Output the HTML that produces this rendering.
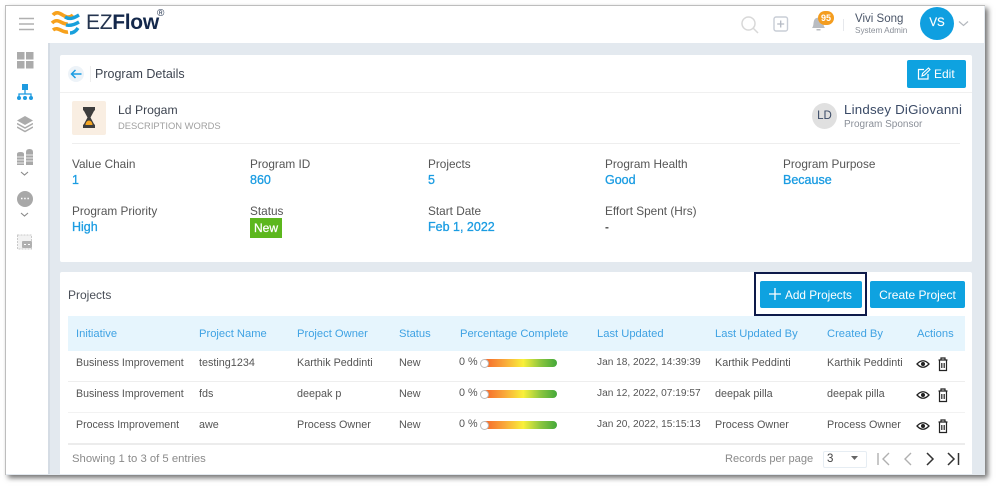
<!DOCTYPE html>
<html><head><meta charset="utf-8"><style>
html,body{margin:0;padding:0;width:1000px;height:491px;overflow:hidden;background:#fff;font-family:"Liberation Sans",sans-serif}
.w{position:absolute;left:0;top:0;width:1000px;height:491px;overflow:hidden;filter:blur(.35px)}
.a{position:absolute}
.t{position:absolute;white-space:nowrap;line-height:16px;font-size:11.8px;color:#555}
.b{color:#1b9ce2;font-size:12.5px;-webkit-text-stroke:.3px #1b9ce2}
.h{color:#3fa2e3;font-size:11.2px}
.c{font-size:10.8px;color:#555}
.bn{font-size:10.6px}
.d{font-size:10.15px}
</style></head><body><div class="w">
<!-- window -->
<div class="a" style="left:5px;top:5px;width:979px;height:469px;background:#e3e9ef;border:1px solid #bdbdbd;border-bottom:0;border-right:0;box-shadow:3px 3px 5px rgba(0,0,0,.55)"></div>
<!-- top bar -->
<div class="a" style="left:6px;top:6px;width:978px;height:37px;background:#fff"></div>
<!-- sidebar -->
<div class="a" style="left:6px;top:43px;width:42px;height:431px;background:#fff;border-right:2px solid #d5dce4"></div>
<!-- hamburger -->
<svg class="a" style="left:19px;top:17px" width="16" height="14"><path d="M0 1.500h15M0 7h15M0 12.500h15" stroke="#b0b0b0" stroke-width="1.600"/></svg>
<!-- logo -->
<svg class="a" style="left:50px;top:9px" width="32" height="28" viewBox="0 0 32 28"><path d="M3 6C8 0 13 8 18 8c3 0 4-1 5-2" fill="none" stroke="#f7a11c" stroke-width="3.600"/><path d="M2 14C8 8 12 16 18 15M3 21c5-4 9 3 15 2" fill="none" stroke="#f7a11c" stroke-width="3.600"/><path d="M15 8c5 3 9 1 14-2M16 16c4 1 8 0 13-3M20 24c3 0 6-2 8-5" fill="none" stroke="#19a0dc" stroke-width="3.400"/></svg>
<div class="t" style="left:86px;top:10px;font-size:21px;line-height:26px;color:#24344f;letter-spacing:-.3px">EZ<b style="color:#14284b">Flow</b></div>
<div class="t" style="left:157px;top:8px;font-size:10px;line-height:12px;color:#24344f">®</div>
<!-- top right icons -->
<svg class="a" style="left:741px;top:16px" width="18" height="18"><circle cx="7.500" cy="7.500" r="6.500" fill="none" stroke="#d8d8d8" stroke-width="1.500"/><path d="M12 12l5 5" stroke="#d8d8d8" stroke-width="1.500"/></svg>
<svg class="a" style="left:773px;top:16px" width="16" height="17"><rect x="1" y="1" width="13.500" height="14" rx="2" fill="none" stroke="#c8cdd6" stroke-width="1.400"/><path d="M7.700 4.500v7M4.200 8h7" stroke="#b5bac4" stroke-width="1.300"/></svg>
<svg class="a" style="left:811px;top:15px" width="16" height="17"><path d="M1 13c2-2 1-6 2.500-8.500C5 2 10 2 11.500 4.500 13 7 12 11 14 13z" fill="#b9bcc1"/><path d="M5.500 14h4v1.500h-4z" fill="#b9bcc1"/></svg>
<div class="a" style="left:818px;top:11px;width:16px;height:14px;border-radius:8px;background:#f49d1f;color:#fff;font-size:9px;font-weight:bold;line-height:14px;text-align:center">95</div>
<div class="a" style="left:843px;top:19px;width:1px;height:12px;background:#e6e8ec"></div>
<div class="t" style="left:855px;top:11px;font-size:11.500px;color:#4a5568">Vivi Song</div>
<div class="t" style="left:855px;top:23px;font-size:8.200px;color:#8a8f98">System Admin</div>
<div class="a" style="left:920px;top:7px;width:34px;height:33px;border-radius:50%;background:#0f9fe0;color:#fff;font-size:11.500px;line-height:33px;text-align:center;-webkit-text-stroke:.2px #fff">VS</div>
<svg class="a" style="left:958px;top:20px" width="11" height="8"><path d="M1 1.500l4.500 4 4.500-4" fill="none" stroke="#b4b8be" stroke-width="1.200"/></svg>
<!-- sidebar icons -->
<svg class="a" style="left:17px;top:52px" width="17" height="17"><path d="M0 0h7.500v7.500H0zM9 0h7.500v7.500H9zM0 9h7.500v7.500H0zM9 9h7.500v7.500H9z" fill="#ababab"/></svg>
<svg class="a" style="left:17px;top:84px" width="16" height="17"><path d="M5 0h6v6H5z" fill="#1e9be0"/><path d="M8 6v4M2 13v-3h12v3" fill="none" stroke="#1e9be0" stroke-width="1.300"/><circle cx="2" cy="14" r="2" fill="#1e9be0"/><circle cx="8" cy="14" r="2" fill="#1e9be0"/><circle cx="14" cy="14" r="2" fill="#1e9be0"/></svg>
<svg class="a" style="left:17px;top:116px" width="16" height="17"><path d="M8 0l8 4.500-8 4.500-8-4.500z" fill="#ababab"/><path d="M0 7.500l8 4.500 8-4.500M0 11l8 4.500 8-4.500" fill="none" stroke="#ababab" stroke-width="1.500"/></svg>
<svg class="a" style="left:17px;top:149px" width="16" height="16"><path d="M0 5q0-2 3.500-2T7 5v11H0zM9 3q0-3 3.500-3T16 3v13H9z" fill="#a8a8a8"/><path d="M0 8h7M0 11h7M0 14h7M9 6h7M9 9h7M9 12h7" stroke="#fff" stroke-width=".8"/></svg>
<svg class="a" style="left:20px;top:171px" width="9" height="6"><path d="M1 1l3.500 3L8 1" fill="none" stroke="#888" stroke-width="1.100"/></svg>
<div class="a" style="left:17px;top:191px;width:16px;height:16px;border-radius:50%;background:#a8a8a8"></div>
<svg class="a" style="left:20px;top:197px" width="10" height="4"><path d="M1 1.500h1.500M4.200 1.500h1.500M7.400 1.500h1.500" stroke="#fff" stroke-width="1.500"/></svg>
<svg class="a" style="left:20px;top:212px" width="9" height="6"><path d="M1 1l3.500 3L8 1" fill="none" stroke="#888" stroke-width="1.100"/></svg>
<svg class="a" style="left:17px;top:234px" width="16" height="16"><rect x=".5" y="1" width="14" height="14" fill="#f2f2f2" stroke="#cacaca" stroke-dasharray="2 1"/><rect x="5" y="7" width="10" height="7" rx="1" fill="#b0b0b0"/><path d="M7 10.500h2M11 10.500h2" stroke="#fff"/></svg>

<!-- Card 1 -->
<div class="a" style="left:60px;top:55px;width:912px;height:207px;background:#fff;border-radius:2px"></div>
<div class="a" style="left:60px;top:92px;width:912px;height:1px;background:#f0f0f0"></div>
<div class="a" style="left:68px;top:66px;width:16px;height:16px;border-radius:50%;background:#edf3f8"></div>
<svg class="a" style="left:70px;top:69px" width="12" height="10"><path d="M1.500 5h10M5.500 1l-4 4 4 4" fill="none" stroke="#1b9ce2" stroke-width="1.500"/></svg>
<div class="a" style="left:90px;top:66px;width:1px;height:16px;background:#eee"></div>
<div class="t" style="left:95px;top:66px;font-size:12.500px;color:#3d4450">Program Details</div>
<div class="a" style="left:907px;top:60px;width:59px;height:28px;background:#0ea2e0;border-radius:2px"></div>
<svg class="a" style="left:917px;top:67px" width="14" height="14"><path d="M11 7v5H1.500V2.500H7" fill="none" stroke="#fff" stroke-width="1.200"/><path d="M5 9l.5-2.500L11.500 1 13 2.500 7.500 8z" fill="none" stroke="#fff" stroke-width="1.100"/></svg>
<div class="t" style="left:934px;top:66px;font-size:12px;color:#fff">Edit</div>
<!-- hourglass -->
<div class="a" style="left:72px;top:101px;width:34px;height:34px;background:#f9eee2;border-radius:2px"></div>
<svg class="a" style="left:82px;top:107px" width="14" height="22"><path d="M1 0h12v3l-1 1-3.500 6.500L12 17l1 1v3H1v-3l1-1 3.500-6.500L2 4 1 3z" fill="#3d3d3d"/><path d="M3.500 18c0-3 2-4.500 3.500-4.500s3.500 1.500 3.500 4.500z" fill="#f5a623"/></svg>
<div class="t" style="left:118px;top:102px;font-size:12.200px;color:#3d4450">Ld Progam</div>
<div class="t" style="left:118px;top:118px;font-size:9.400px;color:#a0a0a0">DESCRIPTION WORDS</div>
<div class="a" style="left:812px;top:103px;width:25px;height:26px;border-radius:50%;background:#e0e0e0;color:#3a4a66;font-size:11.500px;line-height:26px;text-align:center">LD</div>
<div class="t" style="left:844px;top:102px;font-size:13.300px;color:#3a4a66;letter-spacing:.2px">Lindsey DiGiovanni</div>
<div class="t" style="left:844px;top:117px;font-size:10px;color:#8a8f98">Program Sponsor</div>
<div class="a" style="left:72px;top:143px;width:888px;height:1px;background:#eee"></div>
<!-- fields -->
<div class="t" style="left:72px;top:156px">Value Chain</div><div class="t b" style="left:72px;top:172px">1</div>
<div class="t" style="left:250px;top:156px">Program ID</div><div class="t b" style="left:250px;top:172px">860</div>
<div class="t" style="left:428px;top:156px">Projects</div><div class="t b" style="left:428px;top:172px">5</div>
<div class="t" style="left:605px;top:156px">Program Health</div><div class="t b" style="left:605px;top:172px">Good</div>
<div class="t" style="left:783px;top:156px">Program Purpose</div><div class="t b" style="left:783px;top:172px">Because</div>
<div class="t" style="left:72px;top:203px">Program Priority</div><div class="t b" style="left:72px;top:219px">High</div>
<div class="t" style="left:250px;top:203px">Status</div>
<div class="a" style="left:250px;top:218px;width:32px;height:20px;background:#5cb71d;color:#fff;font-size:12px;-webkit-text-stroke:.25px #fff;line-height:20px;text-align:center">New</div>
<div class="t" style="left:428px;top:203px">Start Date</div><div class="t b" style="left:428px;top:219px">Feb 1, 2022</div>
<div class="t" style="left:605px;top:203px">Effort Spent (Hrs)</div><div class="t" style="left:605px;top:219px;font-weight:bold">-</div>

<!-- Card 2 -->
<div class="a" style="left:60px;top:272px;width:912px;height:202px;background:#fff;border-radius:2px 2px 0 0"></div>
<div class="t" style="left:68px;top:287px;font-size:12px;color:#4a4f58">Projects</div>
<div class="a" style="left:754px;top:272px;width:109px;height:40px;border:2.500px solid #0e1a4a"></div>
<div class="a" style="left:760px;top:281px;width:102px;height:27px;background:#0ea2e0;border-radius:2px"></div>
<svg class="a" style="left:769px;top:288px" width="12" height="12"><path d="M6 0v12M0 6h12" stroke="#fff" stroke-width="1.300"/></svg>
<div class="t" style="left:785px;top:287px;font-size:11.800px;color:#fff">Add Projects</div>
<div class="a" style="left:870px;top:281px;width:95px;height:27px;background:#0ea2e0;border-radius:2px;color:#fff;font-size:12px;line-height:28px;text-align:center">Create Project</div>
<!-- table -->
<div class="a" style="left:68px;top:316px;width:897px;height:35px;background:#e6f5fd"></div>
<div class="t h" style="left:76px;top:326px">Initiative</div>
<div class="t h" style="left:199px;top:326px">Project Name</div>
<div class="t h" style="left:297px;top:326px">Project Owner</div>
<div class="t h" style="left:399px;top:326px">Status</div>
<div class="t h" style="left:460px;top:326px">Percentage Complete</div>
<div class="t h" style="left:597px;top:326px">Last Updated</div>
<div class="t h" style="left:715px;top:326px">Last Updated By</div>
<div class="t h" style="left:827px;top:326px">Created By</div>
<div class="t h" style="left:917px;top:326px">Actions</div>
<div class="a" style="left:68px;top:381px;width:897px;height:1px;background:#eeeeee"></div>
<div class="a" style="left:68px;top:412px;width:897px;height:1px;background:#f2f2f2"></div>
<div class="a" style="left:68px;top:443px;width:897px;height:2px;background:#ececec"></div>
<!-- row 1 -->
<div class="t c bn" style="left:76px;top:355px">Business Improvement</div>
<div class="t c" style="left:199px;top:355px">testing1234</div>
<div class="t c" style="left:297px;top:355px">Karthik Peddinti</div>
<div class="t c" style="left:399px;top:355px">New</div>
<div class="t c" style="left:459px;top:354px">0 %</div>
<div class="a" style="left:482px;top:359px;width:75px;height:8px;border-radius:4px;background:linear-gradient(90deg,#f5602a,#f9a83a 30%,#f9f03a 55%,#8cc63f 78%,#43a83a)"></div>
<div class="a" style="left:480px;top:359px;width:7px;height:7px;border-radius:50%;background:#fff;border:1px solid #bbb"></div>
<div class="t c d" style="left:597px;top:355px">Jan 18, 2022, 14:39:39</div>
<div class="t c" style="left:715px;top:355px">Karthik Peddinti</div>
<div class="t c" style="left:827px;top:355px">Karthik Peddinti</div>
<!-- row 2 -->
<div class="t c bn" style="left:76px;top:386px">Business Improvement</div>
<div class="t c" style="left:199px;top:386px">fds</div>
<div class="t c" style="left:297px;top:386px">deepak p</div>
<div class="t c" style="left:399px;top:386px">New</div>
<div class="t c" style="left:459px;top:385px">0 %</div>
<div class="a" style="left:482px;top:390px;width:75px;height:8px;border-radius:4px;background:linear-gradient(90deg,#f5602a,#f9a83a 30%,#f9f03a 55%,#8cc63f 78%,#43a83a)"></div>
<div class="a" style="left:480px;top:390px;width:7px;height:7px;border-radius:50%;background:#fff;border:1px solid #bbb"></div>
<div class="t c d" style="left:597px;top:386px">Jan 12, 2022, 07:19:57</div>
<div class="t c" style="left:715px;top:386px">deepak pilla</div>
<div class="t c" style="left:827px;top:386px">deepak pilla</div>
<!-- row 3 -->
<div class="t c bn" style="left:76px;top:417px">Process Improvement</div>
<div class="t c" style="left:199px;top:417px">awe</div>
<div class="t c" style="left:297px;top:417px">Process Owner</div>
<div class="t c" style="left:399px;top:417px">New</div>
<div class="t c" style="left:459px;top:416px">0 %</div>
<div class="a" style="left:482px;top:421px;width:75px;height:8px;border-radius:4px;background:linear-gradient(90deg,#f5602a,#f9a83a 30%,#f9f03a 55%,#8cc63f 78%,#43a83a)"></div>
<div class="a" style="left:480px;top:421px;width:7px;height:7px;border-radius:50%;background:#fff;border:1px solid #bbb"></div>
<div class="t c d" style="left:597px;top:417px">Jan 20, 2022, 15:15:13</div>
<div class="t c" style="left:715px;top:417px">Process Owner</div>
<div class="t c" style="left:827px;top:417px">Process Owner</div>
<!-- action icons -->
<svg class="a" style="left:916px;top:356px" width="34" height="16"><path d="M1 8q6-6.500 12 0-6 6.500-12 0z" fill="none" stroke="#222" stroke-width="1.300"/><circle cx="7" cy="8" r="2" fill="#222"/><path d="M22.500 4h9M25 4V2h4v2M23.500 4v10.500h7V4M25.800 7v5M28.200 7v5" fill="none" stroke="#222" stroke-width="1.200"/></svg>
<svg class="a" style="left:916px;top:387px" width="34" height="16"><path d="M1 8q6-6.500 12 0-6 6.500-12 0z" fill="none" stroke="#222" stroke-width="1.300"/><circle cx="7" cy="8" r="2" fill="#222"/><path d="M22.500 4h9M25 4V2h4v2M23.500 4v10.500h7V4M25.800 7v5M28.200 7v5" fill="none" stroke="#222" stroke-width="1.200"/></svg>
<svg class="a" style="left:916px;top:418px" width="34" height="16"><path d="M1 8q6-6.500 12 0-6 6.500-12 0z" fill="none" stroke="#222" stroke-width="1.300"/><circle cx="7" cy="8" r="2" fill="#222"/><path d="M22.500 4h9M25 4V2h4v2M23.500 4v10.500h7V4M25.800 7v5M28.200 7v5" fill="none" stroke="#222" stroke-width="1.200"/></svg>
<!-- footer -->
<div class="t" style="left:72px;top:451px;font-size:11.300px;color:#8a8a8a">Showing 1 to 3 of 5 entries</div>
<div class="t" style="left:725px;top:451px;font-size:11.100px;color:#8a8a8a">Records per page</div>
<div class="a" style="left:823px;top:451px;width:42px;height:15px;border:1px solid #e6edf3;border-radius:2px"></div>
<div class="t" style="left:827px;top:451px;font-size:11.500px;color:#444">3</div>
<svg class="a" style="left:851px;top:456px" width="8" height="5"><path d="M0 0h7L3.500 4z" fill="#666"/></svg>
<svg class="a" style="left:877px;top:452px" width="85" height="14"><path d="M1 1v12M12 1L6 7l6 6" fill="none" stroke="#b0b0b0" stroke-width="1.400"/><path d="M34 1l-6 6 6 6" fill="none" stroke="#b0b0b0" stroke-width="1.400"/><path d="M50 1l6 6-6 6" fill="none" stroke="#333" stroke-width="1.500"/><path d="M71 1l6 6-6 6M81.500 1v12" fill="none" stroke="#333" stroke-width="1.500"/></svg>
</div></body></html>
